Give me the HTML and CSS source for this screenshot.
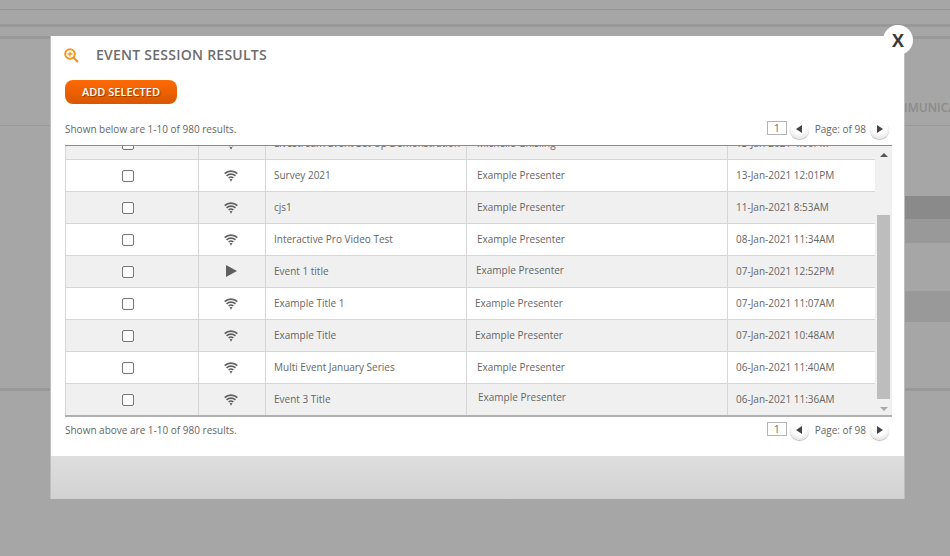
FILE: index.html
```html
<!DOCTYPE html>
<html lang="en">
<head>
<meta charset="utf-8">
<title>Event Session Results</title>
<link rel="stylesheet" href="styles.css">
</head>
<body>
<svg class="defs" width="0" height="0" aria-hidden="true">
  <symbol id="wifi" viewBox="0 0 14 12">
    <path d="M.7 3.7C4.2.2 9.8.2 13.3 3.7" fill="none" stroke="currentColor" stroke-width="1.8"/>
    <path d="M2.6 5.9C5 3.6 9 3.6 11.4 5.9" fill="none" stroke="currentColor" stroke-width="1.7"/>
    <path d="M4.6 8C6 6.8 8 6.8 9.4 8" fill="none" stroke="currentColor" stroke-width="1.6"/>
    <path d="M5.6 9.6L7 8.7l1.4.9L7 11.6z" fill="currentColor"/>
  </symbol>
</svg>
<div class="backdrop">
  <div class="bg-line bg-a"></div>
  <div class="bg-band bg-b"></div>
  <div class="bg-band bg-c"></div>
  <div class="bg-tab">IMUNICA</div>
  <div class="bg-line bg-d"></div>
  <div class="bg-strip bg-e"></div>
  <div class="bg-strip bg-f"></div>
  <div class="bg-strip bg-g"></div>
  <div class="bg-band bg-i"></div>
</div>
<section class="modal">
  <div class="modal-body">
    <header class="modal-head">
      <svg class="search-icon" viewBox="0 0 15 15" width="15" height="15" aria-hidden="true">
        <circle cx="6" cy="6" r="4.8" fill="none" stroke="#f7941d" stroke-width="2"/>
        <path d="M9.5 9.5L14 14" stroke="#f7941d" stroke-width="2.2"/>
        <path d="M3.6 6h4.8M6 3.6v4.8" stroke="#f7941d" stroke-width="1.3"/>
      </svg>
      <h1 class="title">EVENT SESSION RESULTS</h1>
    </header>
    <button class="add-btn" type="button">ADD SELECTED</button>
    <div class="pager-row pager-top">
      <span class="count">Shown below are 1-10 of 980 results.</span>
      <div class="pager">
        <span class="page-box">1</span>
        <span class="round-btn"><i class="tri tri-left"></i></span>
        <span class="page-label">Page: of 98</span>
        <span class="round-btn"><i class="tri tri-right"></i></span>
      </div>
    </div>
    <div class="table-wrap">
      <div class="table-clip">
        <table class="results">
          <colgroup><col class="c1"><col class="c2"><col class="c3"><col class="c4"><col class="c5"></colgroup>
          <tbody>
            <tr class="alt"><td class="chk"><span class="box"></span></td><td class="ico"><svg class="wifi"><use href="#wifi"/></svg></td><td>Livestream Event Set Up Demonstration</td><td class="pres">Michelle Ghisling</td><td class="date">13-Jan-2021 4:00PM</td></tr>
            <tr><td class="chk"><span class="box"></span></td><td class="ico"><svg class="wifi"><use href="#wifi"/></svg></td><td>Survey 2021</td><td class="pres">Example Presenter</td><td class="date">13-Jan-2021 12:01PM</td></tr>
            <tr class="alt"><td class="chk"><span class="box"></span></td><td class="ico"><svg class="wifi"><use href="#wifi"/></svg></td><td>cjs1</td><td class="pres">Example Presenter</td><td class="date">11-Jan-2021 8:53AM</td></tr>
            <tr><td class="chk"><span class="box"></span></td><td class="ico"><svg class="wifi"><use href="#wifi"/></svg></td><td>Interactive Pro Video Test</td><td class="pres">Example Presenter</td><td class="date">08-Jan-2021 11:34AM</td></tr>
            <tr class="alt"><td class="chk"><span class="box"></span></td><td class="ico"><svg class="play" viewBox="0 0 12 12"><path d="M0 0L11 6 0 12z"/></svg></td><td>Event 1 title</td><td class="pres p-b">Example Presenter</td><td class="date">07-Jan-2021 12:52PM</td></tr>
            <tr><td class="chk"><span class="box"></span></td><td class="ico"><svg class="wifi"><use href="#wifi"/></svg></td><td>Example Title 1</td><td class="pres p-c">Example Presenter</td><td class="date">07-Jan-2021 11:07AM</td></tr>
            <tr class="alt"><td class="chk"><span class="box"></span></td><td class="ico"><svg class="wifi"><use href="#wifi"/></svg></td><td>Example Title</td><td class="pres p-c">Example Presenter</td><td class="date">07-Jan-2021 10:48AM</td></tr>
            <tr><td class="chk"><span class="box"></span></td><td class="ico"><svg class="wifi"><use href="#wifi"/></svg></td><td>Multi Event January Series</td><td class="pres">Example Presenter</td><td class="date">06-Jan-2021 11:40AM</td></tr>
            <tr class="alt"><td class="chk"><span class="box"></span></td><td class="ico"><svg class="wifi"><use href="#wifi"/></svg></td><td>Event 3 Title</td><td class="pres p-d">Example Presenter</td><td class="date">06-Jan-2021 11:36AM</td></tr>
          </tbody>
        </table>
      </div>
      <div class="scrollbar">
        <i class="sb-up"></i>
        <div class="sb-thumb"></div>
        <i class="sb-down"></i>
      </div>
    </div>
    <div class="pager-row pager-bottom">
      <span class="count">Shown above are 1-10 of 980 results.</span>
      <div class="pager">
        <span class="page-box">1</span>
        <span class="round-btn"><i class="tri tri-left"></i></span>
        <span class="page-label">Page: of 98</span>
        <span class="round-btn"><i class="tri tri-right"></i></span>
      </div>
    </div>
  </div>
  <footer class="modal-foot"></footer>
  <button class="close" type="button">X</button>
</section>
</body>
</html>
```
FILE: styles.css
```css
html, body { margin: 0; padding: 0; height: 100%; overflow: hidden; }
body { background: #a6a6a6; font-family: "Open Sans", sans-serif; color: #666; position: relative; }
.defs { position: absolute; }

/* dimmed page behind the dialog */
.backdrop { position: absolute; inset: 0; overflow: hidden; }
.backdrop > div { position: absolute; left: 0; right: 0; }
.bg-a { top: 9px; height: 1px; background: #969696; }
.bg-b { top: 24px; height: 3px; background: #999; }
.bg-c { top: 36px; height: 3px; background: #999; }
.bg-d { top: 125px; height: 1px; background: #999; }
.bg-i { top: 388px; height: 3px; background: #999; }
.bg-tab { top: 100px; left: 904px !important; width: 60px; font-size: 12px; font-weight: 600; color: #8c8c8c; white-space: nowrap; line-height: 16px; }
.bg-strip { left: 880px !important; }
.bg-e { top: 196px; height: 23px; background: #8a8a8a; }
.bg-f { top: 219px; height: 24px; background: #999; }
.bg-g { top: 291px; height: 31px; background: #999; }

/* dialog */
.modal { position: absolute; left: 51px; top: 36px; width: 853px; height: 463px; background: #fff; display: flex; flex-direction: column; box-shadow: -1px 0 0 #bdbdbd, 1px 0 0 #bdbdbd; }
.modal-body { flex: 1; padding: 0 14px; display: flex; flex-direction: column; }
.modal-foot { height: 43px; background: linear-gradient(#dedede, #d2d2d2); }
.modal-head { display: flex; align-items: center; height: 38px; }
.search-icon { margin-left: -1px; flex: none; }
.title { margin: 0 0 0 17px; font-size: 14px; font-weight: 600; color: #6d6d6d; line-height: 38px; letter-spacing: .25px; }
.add-btn { margin-top: 6px; width: 112px; height: 24px; padding: 0; border: 0; border-radius: 8px; background: linear-gradient(#ff6a00, #d95700); color: #fff; font: 600 11px/24px "Open Sans", sans-serif; text-shadow: 1px 1px 1px rgba(90,40,0,.6); }
.pager-row { display: flex; justify-content: space-between; align-items: center; height: 24px; width: 824px; }
.pager-top { margin-top: 13px; margin-bottom: 4px; }
.pager-bottom { margin-top: 1px; }
.count { font-size: 10px; color: #666; }
.pager { display: flex; align-items: center; font-size: 10px; color: #666; }
.page-box { width: 18px; height: 12px; border: 1px solid #b4b4b4; text-align: center; font-size: 10px; line-height: 12px; margin-right: 3px; margin-top: -2px; }
.round-btn { width: 19px; height: 19px; border-radius: 50%; background: radial-gradient(circle at 50% 35%, #fff 45%, #d4d4d4 100%); box-shadow: 0 1px 1px #bbb; display: flex; align-items: center; justify-content: center; }
.page-label { margin: 0 4px 0 6px; }
.tri { width: 0; height: 0; border-top: 4px solid transparent; border-bottom: 4px solid transparent; }
.tri-left { border-right: 6px solid #444; }
.tri-right { border-left: 6px solid #444; }

/* table */
.table-wrap { width: 827px; height: 272px; border-top: 1px solid #8c8c8c; border-bottom: 2px solid #b0b0b0; box-sizing: border-box; display: flex; flex: none; }
.table-clip { width: 810px; overflow: hidden; height: 100%; }
.results { margin-top: -19px; width: 810px; border-collapse: collapse; table-layout: fixed; font-size: 10px; color: #666; }
.c1 { width: 133px; } .c2 { width: 67px; } .c3 { width: 201px; } .c4 { width: 261px; } .c5 { width: 148px; }
.results tr { height: 32px; background: #fff; }
.results tr.alt { background: #f0f0f0; }
.results td { border: 1px solid #d6d6d6; padding: 0 0 2px 8px; white-space: nowrap; overflow: hidden; box-sizing: border-box; height: 32px; }
.results td.chk { padding: 1px 9px 0 0; text-align: center; line-height: 0; }
.results td.ico { padding: 0 2px 0 0; text-align: center; line-height: 0; }
.results td.pres { padding-left: 10px; padding-bottom: 1px; }
.results td.p-b { padding-left: 9px; padding-bottom: 4px; }
.results td.p-c { padding-left: 8px; padding-bottom: 2px; }
.results td.p-d { padding-left: 11px; padding-bottom: 6px; }
.box { display: inline-block; width: 10px; height: 10px; border: 1px solid #757575; border-radius: 2px; background: #fff; }
.wifi { width: 14px; height: 12px; color: #5f5f5f; margin-bottom: -1px; }
.play { width: 12px; height: 12px; fill: #5f5f5f; margin: 0 0 1px 2px; }

/* scrollbar */
.scrollbar { width: 17px; background: #f0f0f0; position: relative; display: flex; flex-direction: column; align-items: center; }
.sb-up { margin-top: 7px; width: 0; height: 0; border: 4px solid transparent; border-top: 0; border-bottom: 4px solid #555; }
.sb-thumb { position: absolute; top: 69px; left: 2px; width: 13px; height: 184px; background: #bdbdbd; }
.sb-down { position: absolute; bottom: 4px; left: 4.5px; width: 0; height: 0; border: 4px solid transparent; border-bottom: 0; border-top: 4px solid #a8a8a8; }

/* close */
.close { position: absolute; top: -11px; right: -9px; width: 30px; height: 30px; padding: 0; border: 0; border-radius: 50%; background: #fff; color: #3a3a3a; font: 700 18px/30px "Open Sans", sans-serif; }
```
